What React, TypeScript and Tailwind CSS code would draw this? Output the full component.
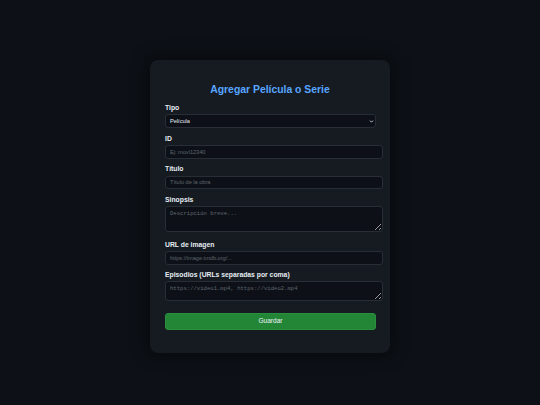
import { ChevronDown } from 'lucide-react';

const sans = "font-['Liberation_Sans',Arial,sans-serif]";
const mono = "font-['Liberation_Mono','DejaVu_Sans_Mono',monospace]";

function Label({ children, className = '' }: { children: React.ReactNode; className?: string }) {
  return (
    <label className={`block text-[6.8px] leading-[8px] font-bold text-[#e6edf3] ${className}`}>
      {children}
    </label>
  );
}

const field =
  'block w-[218px] rounded-[3px] border border-[#282e36] bg-[#0d1117] px-[4px] text-[#c9d1d9] outline-none placeholder:text-[#5f666f]';

export default function App() {
  return (
    <main className={`min-h-[405px] w-full bg-[#0d1117] ${sans}`}>
      <div className="flex justify-center pt-[60px]">
        <form className="w-[240px] rounded-[8px] bg-[#161b22] px-[15px] pt-[24px] pb-[23.5px] shadow-[0_0_16px_4px_rgba(0,0,0,0.45)]">
          <h2 className="text-center text-[10.4px] leading-[12px] font-bold text-[#58a6ff]">
            Agregar Película o Serie
          </h2>

          <Label className="mt-[8px]">Tipo</Label>
          <div className="relative mt-[2px] h-[14px] w-[211px]">
            <div className="flex h-full items-center rounded-[3px] border border-[#282e36] bg-[#0d1117] pl-[4px] text-[5.6px] text-[#e6edf3]">
              Película
            </div>
            <ChevronDown
              className="absolute top-[4.5px] right-[2px] h-[5px] w-[5px] text-[#e6edf3]"
              strokeWidth={4}
            />
          </div>

          <Label className="mt-[7px]">ID</Label>
          <input className={`${field} mt-[2px] h-[13.5px] text-[5.6px]`} placeholder="Ej: movi12340" />

          <Label className="mt-[6.5px]">Título</Label>
          <input className={`${field} mt-[2.5px] h-[13.5px] text-[5.6px]`} placeholder="Título de la obra" />

          <Label className="mt-[7px]">Sinopsis</Label>
          <textarea
            className={`${field} ${mono} mt-[2px] h-[26px] resize-y pt-[3px] text-[5.6px] leading-[7px]`}
            placeholder="Descripción breve..."
          />

          <Label className="mt-[8.5px]">URL de imagen</Label>
          <input
            className={`${field} mt-[2.5px] h-[13.5px] text-[5.6px]`}
            placeholder="https://image.tmdb.org/..."
          />

          <Label className="mt-[6px]">Episodios (URLs separadas por coma)</Label>
          <textarea
            className={`${field} ${mono} mt-[2.5px] h-[20px] resize-y pt-[3px] text-[5.6px] leading-[7px]`}
            placeholder="https://video1.mp4, https://video2.mp4"
          />

          <button
            type="button"
            className="mt-[11.5px] block h-[17px] w-[211px] rounded-[3px] border border-[#2a8f3e] bg-[#238636] text-[6.5px] text-[#f0f6fc]"
          >
            Guardar
          </button>
        </form>
      </div>
    </main>
  );
}
